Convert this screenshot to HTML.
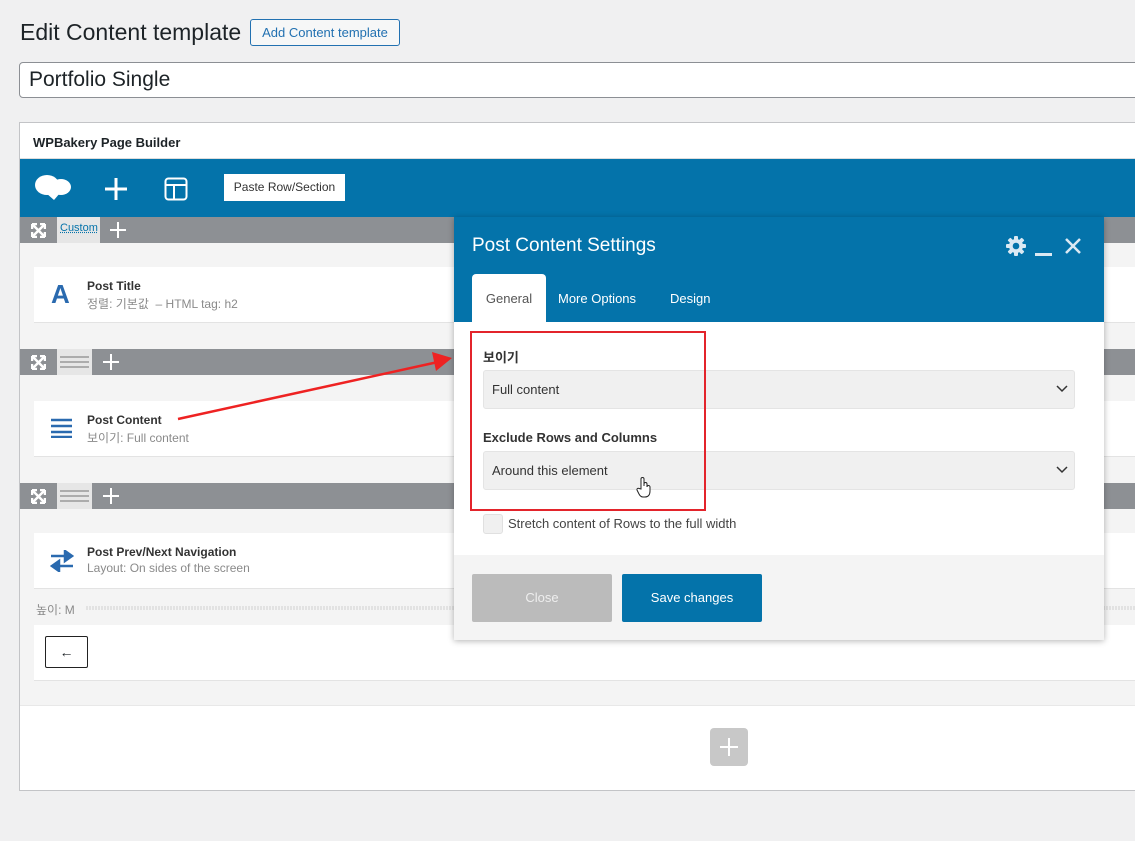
<!DOCTYPE html>
<html><head><meta charset="utf-8"><style>
*{box-sizing:border-box;margin:0;padding:0}
body{width:1135px;height:841px;overflow:hidden;background:#f0f0f1;font-family:"Liberation Sans","Noto Sans CJK KR",sans-serif;color:#1d2327;position:relative}
.a{position:absolute}
h1{position:absolute;left:20px;top:19px;font-size:23px;font-weight:400;color:#1d2327}
.addbtn{left:250px;top:19px;width:150px;height:27px;border:1px solid #2271b1;border-radius:3px;background:#f6f7f7;color:#2271b1;font-size:13px;text-align:center;line-height:25px}
.title{left:19px;top:62px;width:1130px;height:36px;border:1px solid #8c8f94;border-radius:4px;background:#fff;font-size:21px;padding-left:9px;line-height:34px}
.panel{left:19px;top:122px;width:1130px;height:669px;border:1px solid #c3c4c7;background:#f4f4f4}
.ph{left:0;top:0;width:100%;height:36px;background:#fff;border-bottom:1px solid #ddd;font-size:13px;font-weight:700;padding:12px 13px}
.bar{left:0;top:36px;width:100%;height:58px;background:#0473aa}
.row{left:0;width:100%;height:26px;background:#8d9094}
.el{left:14px;width:1120px;background:#fff;border-bottom:1px solid #e3e3e3}
.el b{position:absolute;left:53px;top:12px;font-size:12px;font-weight:700;color:#333}
.el span{position:absolute;left:53px;top:28px;font-size:12px;color:#8a8a8a}
.modal{left:454px;top:217px;width:650px;height:423px;background:#fff;box-shadow:0 1px 6px rgba(0,0,0,.3)}
.sel{left:29px;width:592px;height:39px;background:#f0f0f0;border-radius:3px;border:1px solid #e4e4e4;font-size:13px;color:#333;padding-left:8px;line-height:37px}
.sel svg{position:absolute;right:6px;top:14px}
.lbl{left:29px;font-size:13px;font-weight:700;color:#333}
</style></head><body>
<h1>Edit Content template</h1>
<div class="a addbtn">Add Content template</div>
<div class="a title">Portfolio Single</div>
<div class="a panel">
 <div class="a ph">WPBakery Page Builder</div>
 <div class="a bar">
  <svg class="a" style="left:14px;top:14px" width="38" height="28" viewBox="0 0 38 28"><ellipse cx="13" cy="12" rx="12" ry="10" fill="#fff"/><ellipse cx="27" cy="14" rx="10" ry="8" fill="#fff"/><path d="M12 20 L20 27 L26 20Z" fill="#fff"/></svg>
  <svg class="a" style="left:84px;top:18px" width="24" height="24"><path d="M12 1V23M1 12H23" stroke="#fff" stroke-width="3"/></svg>
  <svg class="a" style="left:144px;top:18px" width="24" height="24"><rect x="1.5" y="1.5" width="21" height="21" rx="3" fill="none" stroke="#fff" stroke-width="2"/><path d="M2 8H22M10 8V22" stroke="#fff" stroke-width="2"/></svg>
  <div class="a" style="left:204px;top:15px;width:121px;height:27px;background:#fff;font-size:12px;color:#333;text-align:center;line-height:27px">Paste Row/Section</div>
 </div>
 <div class="a row" style="top:94px">
  <svg class="a" style="left:11px;top:6px" width="15" height="15"><path d="M1 1L14 14M14 1L1 14M1 1h5M1 1v5M14 1h-5M14 1v5M1 14h5M1 14v-5M14 14h-5M14 14v-5" stroke="#fff" stroke-width="2.5"/></svg>
  <div class="a" style="left:37px;top:0;width:43px;height:26px;background:#e6e6e6;font-size:11px;color:#0473aa;padding:5px 3px"><u style="text-decoration:underline dotted">Custom</u></div>
  <svg class="a" style="left:90px;top:5px" width="16" height="16"><path d="M8 0V16M0 8H16" stroke="#fff" stroke-width="2"/></svg>
 </div>
 <div class="a el" style="top:144px;height:56px">
  <div class="a" style="left:17px;top:12px;font-size:26px;font-weight:700;color:#2a6aaf">A</div>
  <b>Post Title</b><span>정렬: 기본값 &nbsp;– HTML tag: h2</span>
 </div>
 <div class="a row" style="top:226px">
  <svg class="a" style="left:11px;top:6px" width="15" height="15"><path d="M1 1L14 14M14 1L1 14M1 1h5M1 1v5M14 1h-5M14 1v5M1 14h5M1 14v-5M14 14h-5M14 14v-5" stroke="#fff" stroke-width="2.5"/></svg>
  <div class="a" style="left:37px;top:0;width:35px;height:26px;background:#e6e6e6"><svg width="35" height="26"><path d="M3 8H32M3 13H32M3 18H32" stroke="#999" stroke-width="1.5"/></svg></div>
  <svg class="a" style="left:83px;top:5px" width="16" height="16"><path d="M8 0V16M0 8H16" stroke="#fff" stroke-width="2"/></svg>
 </div>
 <div class="a el" style="top:278px;height:56px">
  <svg class="a" style="left:17px;top:17px" width="21" height="20"><path d="M0 2H21M0 8H21M0 14H21M0 19H21" stroke="#2a6aaf" stroke-width="2.5"/></svg>
  <b>Post Content</b><span>보이기: Full content</span>
 </div>
 <div class="a row" style="top:360px">
  <svg class="a" style="left:11px;top:6px" width="15" height="15"><path d="M1 1L14 14M14 1L1 14M1 1h5M1 1v5M14 1h-5M14 1v5M1 14h5M1 14v-5M14 14h-5M14 14v-5" stroke="#fff" stroke-width="2.5"/></svg>
  <div class="a" style="left:37px;top:0;width:35px;height:26px;background:#e6e6e6"><svg width="35" height="26"><path d="M3 8H32M3 13H32M3 18H32" stroke="#999" stroke-width="1.5"/></svg></div>
  <svg class="a" style="left:83px;top:5px" width="16" height="16"><path d="M8 0V16M0 8H16" stroke="#fff" stroke-width="2"/></svg>
 </div>
 <div class="a el" style="top:410px;height:56px">
  <svg class="a" style="left:16px;top:17px" width="24" height="22"><path d="M1 6H19M15 1L22 6L15 11Z M23 16H5M9 11L2 16L9 21Z" stroke="#2a6aaf" stroke-width="2.5" fill="#2a6aaf"/></svg>
  <b>Post Prev/Next Navigation</b><span>Layout: On sides of the screen</span>
 </div>
 <div class="a" style="left:16px;top:478px;font-size:12px;color:#8a8a8a">높이: M</div>
 <div class="a" style="left:66px;top:483px;width:1070px;height:4px;background:repeating-linear-gradient(90deg,#e2e2e2 0 2px,transparent 2px 3px)"></div>
 <div class="a el" style="top:502px;height:56px">
  <div class="a" style="left:11px;top:11px;width:43px;height:32px;border:1px solid #222;border-radius:2px;text-align:center;line-height:30px;font-size:14px">←</div>
 </div>
 <div class="a" style="left:0;top:582px;width:100%;height:85px;background:#fff;border-top:1px solid #e8e8e8"></div>
 <div class="a" style="left:690px;top:605px;width:38px;height:38px;background:#c8c8c8;border-radius:4px"><svg width="38" height="38"><path d="M19 10V28M10 19H28" stroke="#fff" stroke-width="2"/></svg></div>
</div>
<svg class="a" style="left:0;top:0" width="1135" height="841"><path d="M178 419L438 362" stroke="#e22" stroke-width="2.5"/><path d="M452 358L432 352L436 371Z" fill="#e22"/></svg>
<div class="a modal">
 <div class="a" style="left:0;top:0;width:650px;height:105px;background:#0473aa"></div>
 <div class="a" style="left:18px;top:18px;font-size:19px;color:#fff">Post Content Settings</div>
 <svg class="a" style="left:552px;top:19px" width="20" height="20" viewBox="0 0 20 20"><g fill="#dbe9f3"><circle cx="10" cy="10" r="7"/><rect x="8" y="0" width="4" height="20" rx="1"/><rect x="0" y="8" width="20" height="4" rx="1"/><rect x="8" y="0" width="4" height="20" rx="1" transform="rotate(45 10 10)"/><rect x="8" y="0" width="4" height="20" rx="1" transform="rotate(-45 10 10)"/></g><circle cx="10" cy="10" r="3.3" fill="#0473aa"/></svg>
 <div class="a" style="left:581px;top:36px;width:17px;height:2.5px;background:#dbe9f3"></div>
 <svg class="a" style="left:611px;top:21px" width="16" height="16"><path d="M1 1L15 15M15 1L1 15" stroke="#dbe9f3" stroke-width="2.5"/></svg>
 <div class="a" style="left:18px;top:57px;width:74px;height:48px;background:#fff;border-radius:4px 4px 0 0;font-size:13px;color:#555;text-align:center;line-height:50px">General</div>
 <div class="a" style="left:104px;top:74px;font-size:13px;color:#fff">More Options</div>
 <div class="a" style="left:216px;top:74px;font-size:13px;color:#fff">Design</div>
 <div class="a lbl" style="top:130px">보이기</div>
 <div class="a sel" style="top:153px">Full content<svg width="12" height="8"><path d="M1 1L6 6L11 1" stroke="#333" stroke-width="1.5" fill="none"/></svg></div>
 <div class="a lbl" style="top:213px">Exclude Rows and Columns</div>
 <div class="a sel" style="top:234px">Around this element<svg width="12" height="8"><path d="M1 1L6 6L11 1" stroke="#333" stroke-width="1.5" fill="none"/></svg></div>
 <div class="a" style="left:16px;top:114px;width:236px;height:180px;border:2.5px solid #e3242b"></div>
 <svg class="a" style="left:182px;top:259px" width="16" height="22"><path d="M5 13V3a1.5 1.5 0 0 1 3 0v7V8a1.5 1.5 0 0 1 3 0v3a1.5 1.5 0 0 1 3 0v4c0 4-2 6-5 6H7c-2 0-3-1-4-3L1 14a1.3 1.3 0 0 1 2-1.5Z" fill="#fff" stroke="#222" stroke-width="1"/></svg>
 <div class="a" style="left:29px;top:297px;width:20px;height:20px;background:#f0f0f0;border:1px solid #e0e0e0;border-radius:3px"></div>
 <div class="a" style="left:54px;top:299px;font-size:13px;color:#444">Stretch content of Rows to the full width</div>
 <div class="a" style="left:0;top:338px;width:650px;height:85px;background:#f4f4f4"></div>
 <div class="a" style="left:18px;top:357px;width:140px;height:48px;background:#bbb;border-radius:2px;color:#eee;font-size:13px;text-align:center;line-height:48px">Close</div>
 <div class="a" style="left:168px;top:357px;width:140px;height:48px;background:#0473aa;border-radius:2px;color:#fff;font-size:13px;text-align:center;line-height:48px">Save changes</div>
</div>
</body></html>
